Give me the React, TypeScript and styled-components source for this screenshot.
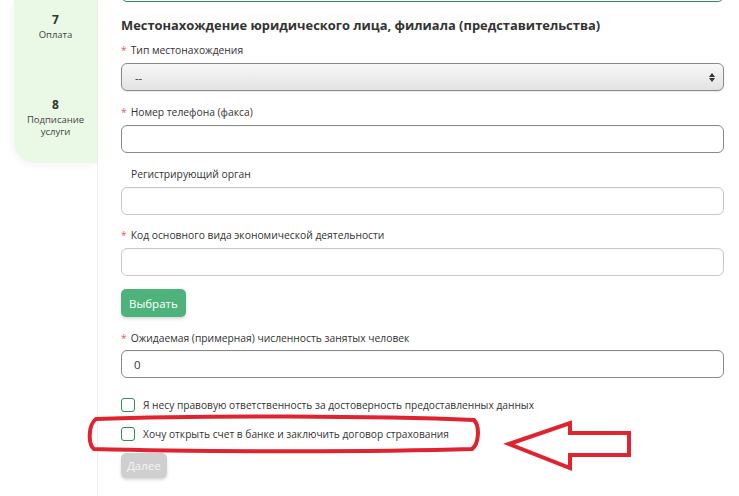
import React from "react";
import styled, { createGlobalStyle } from "styled-components";

const GlobalStyle = createGlobalStyle`
  html, body {
    margin: 0;
    padding: 0;
    background: #fff;
    overflow: hidden;
  }
  body {
    font-family: "Open Sans", "Noto Sans", Arial, sans-serif;
    color: #333;
  }
`;

// layout
const Page = styled.div`
  position: relative;
  display: flex;
  width: 739px;
  height: 496px;
  overflow: hidden;
`;

const Sidebar = styled.aside`
  width: 98px;
  padding-left: 14px;
  box-sizing: border-box;
  border-right: 1px solid #ececec;
  flex-shrink: 0;
`;

const StepsPanel = styled.div`
  background: #e9f9e6;
  border-bottom-left-radius: 22px;
  height: 163px;
  display: flex;
  flex-direction: column;
  align-items: center;
  padding-top: 12px;
  box-sizing: border-box;
  gap: 55px;
  box-shadow: -2px 3px 6px rgba(0, 0, 0, 0.04);
`;

const Step = styled.div`
  display: flex;
  flex-direction: column;
  align-items: center;
  text-align: center;
  font-size: 9.5px;
  line-height: 12.5px;
  color: #444;
`;

const StepNum = styled.span`
  font-size: 12px;
  font-weight: 700;
  line-height: 16px;
  margin-bottom: 1px;
  color: #333;
`;

const Main = styled.main`
  flex: 1;
  padding: 0 15px 0 23px;
  display: flex;
  flex-direction: column;
`;

const CutInput = styled.div`
  height: 28px;
  margin-top: -26px;
  border: 1.5px solid #2f8a55;
  border-radius: 6px;
  box-sizing: border-box;
`;

const Heading = styled.h2`
  margin: 13px 0 0;
  font-size: 12.9px;
  font-weight: 700;
  line-height: 20px;
  color: #333;
`;

const Label = styled.div<{ $indent?: boolean; $gap?: number; $after?: number }>`
  font-size: 10.3px;
  line-height: 14px;
  color: #333;
  margin-top: ${(p) => p.$gap ?? 14}px;
  margin-bottom: ${(p) => p.$after ?? 6}px;
  padding-left: ${(p) => (p.$indent ? "10px" : "0")};
`;

const Star = styled.span`
  color: #e06060;
  margin-right: 4px;
`;

const Input = styled.div<{ $soft?: boolean }>`
  height: 28px;
  border: 1px solid ${(p) => (p.$soft ? "#c9c9c9" : "#8a8a8a")};
  border-radius: 6px;
  box-sizing: border-box;
  display: flex;
  align-items: center;
  padding-left: 12px;
  font-size: 11.5px;
  color: #333;
  box-shadow: inset 0 1px 1px rgba(0, 0, 0, 0.04);
`;

const Select = styled.div`
  height: 28px;
  border: 1px solid #8a8a8a;
  border-radius: 6px;
  box-sizing: border-box;
  display: flex;
  align-items: center;
  justify-content: space-between;
  padding: 0 8px 0 13px;
  font-size: 11px;
  color: #333;
  background: linear-gradient(#f8f8f8, #e2e2e2);
  box-shadow: 0 1px 2px rgba(0, 0, 0, 0.1);
`;

const Arrows = styled.span`
  display: flex;
  flex-direction: column;
  align-items: center;
  gap: 1px;
`;

const Button = styled.div<{ $disabled?: boolean; $gap: number }>`
  align-self: flex-start;
  margin-top: ${(p) => p.$gap}px;
  height: ${(p) => (p.$disabled ? 25 : 28)}px;
  padding: 0 ${(p) => (p.$disabled ? 6 : 8)}px;
  display: flex;
  align-items: center;
  border-radius: 5px;
  font-size: 11.5px;
  color: ${(p) => (p.$disabled ? "#f4f4f4" : "#fff")};
  background: ${(p) => (p.$disabled ? "#cfcfcf" : "#4db37a")};
  box-shadow: 0 2px 3px rgba(0, 0, 0, 0.15);
`;

const CheckRow = styled.label<{ $gap: number }>`
  display: flex;
  align-items: center;
  gap: 8px;
  margin-top: ${(p) => p.$gap}px;
  font-size: 10.2px;
  color: #333;
  height: 14px;
`;

const Box = styled.span`
  width: 14px;
  height: 14px;
  border: 1.5px solid #2f8a55;
  border-radius: 3px;
  box-sizing: border-box;
  flex-shrink: 0;
`;

const Overlay = styled.svg`
  position: absolute;
  left: 0;
  top: 0;
  pointer-events: none;
`;

export default function App() {
  return (
    <>
      <GlobalStyle />
      <Page>
        <Sidebar>
          <StepsPanel>
            <Step>
              <StepNum>7</StepNum>
              Оплата
            </Step>
            <Step>
              <StepNum>8</StepNum>
              Подписание
              <br />
              услуги
            </Step>
          </StepsPanel>
        </Sidebar>

        <Main>
          <CutInput />
          <Heading>
            Местонахождение юридического лица, филиала (представительства)
          </Heading>

          <Label $gap={8}>
            <Star>*</Star>Тип местонахождения
          </Label>
          <Select>
            <span>--</span>
            <Arrows>
              <svg width="6" height="4" viewBox="0 0 6 4">
                <path d="M3 0 L6 4 L0 4 Z" fill="#333" />
              </svg>
              <svg width="6" height="4" viewBox="0 0 6 4">
                <path d="M0 0 L6 0 L3 4 Z" fill="#333" />
              </svg>
            </Arrows>
          </Select>

          <Label>
            <Star>*</Star>Номер телефона (факса)
          </Label>
          <Input />

          <Label $indent>Регистрирующий орган</Label>
          <Input $soft />

          <Label $gap={13}>
            <Star>*</Star>Код основного вида экономической деятельности
          </Label>
          <Input $soft />

          <Button $gap={13}>Выбрать</Button>

          <Label $gap={14} $after={5}>
            <Star>*</Star>Ожидаемая (примерная) численность занятых человек
          </Label>
          <Input>0</Input>

          <CheckRow $gap={20}>
            <Box />Я несу правовую ответственность за достоверность
            предоставленных данных
          </CheckRow>
          <CheckRow $gap={15}>
            <Box />
            Хочу открыть счет в банке и заключить договор страхования
          </CheckRow>
          <Button $disabled $gap={12}>
            Далее
          </Button>
        </Main>

        <Overlay width="739" height="496" viewBox="0 0 739 496">
          <path
            d="M96 419 C 200 415, 380 416, 474 420 C 480 426, 479 444, 472 449 C 380 452, 200 452, 94 449 C 88 444, 88 425, 96 419 Z"
            fill="none"
            stroke="#e0242f"
            strokeWidth="4"
          />
          <path
            d="M509 444 L570 423 L570 433 L629 433 L629 455 L570 455 L570 468 Z"
            fill="none"
            stroke="#e0242f"
            strokeWidth="4"
            strokeLinejoin="miter"
          />
        </Overlay>
      </Page>
    </>
  );
}
